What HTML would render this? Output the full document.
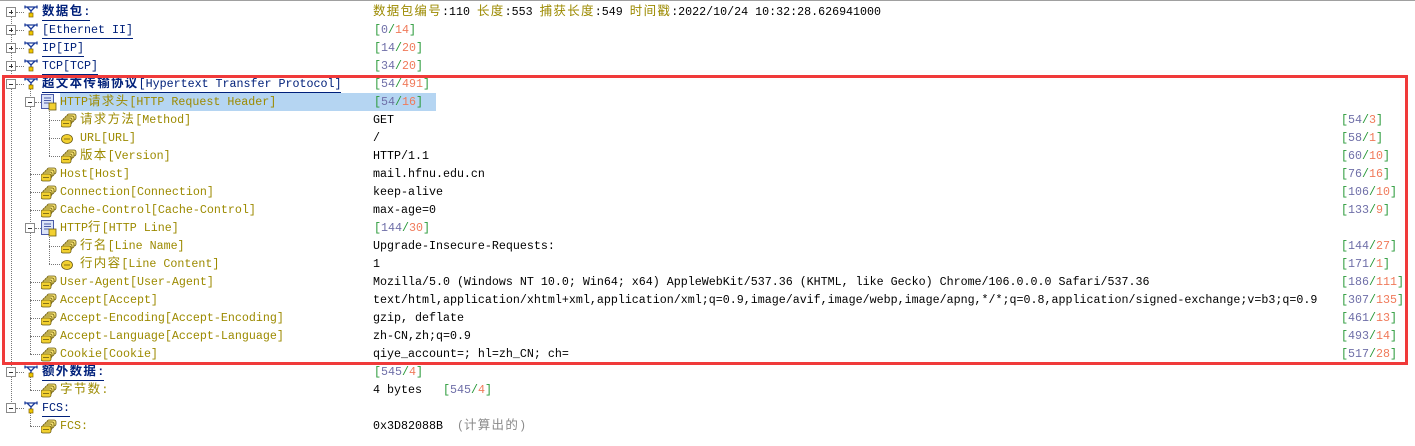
<!DOCTYPE html>
<html><head><meta charset="utf-8"><style>
body{margin:0;width:1415px;height:446px;background:#fff;position:relative;overflow:hidden;font-family:"Liberation Mono","Noto Sans CJK SC",monospace;font-size:11.67px;color:#000}
.top{position:absolute;left:0;top:0;width:1415px;height:1px;background:#a0a0a0}
.r{position:absolute;height:18px;line-height:18px;white-space:nowrap}
.c{font-family:"Noto Sans CJK SC","WenQuanYi Zen Hei",sans-serif;font-size:12.5px;letter-spacing:1.3px;line-height:1}
.l0{color:#00207a;font-weight:bold;border-bottom:1.5px solid #00207a;line-height:15px;display:inline-block}
.lb{color:#9c8a00}
.g{color:#2a9a3a}.p{color:#6f6fa8}.s{color:#f07a5a}.gy{color:#8a8a8a}
.vl{position:absolute;border-left:1px dotted #777;width:0}
.hl{position:absolute;border-top:1px dotted #777;height:0}
.ex{position:absolute;width:8px;height:8px;border:1px solid #8a8a8a;background:#fff}
.ex:before{content:"";position:absolute;left:2px;top:3.5px;width:4px;height:1px;background:#333}
.ex.p2:after{content:"";position:absolute;left:3.5px;top:2px;width:1px;height:4px;background:#333}
svg{position:absolute}
.sel{position:absolute;left:60px;top:93px;width:376px;height:18px;background:#b5d5f2}
.box{position:absolute;left:2px;top:75px;width:1400px;height:284px;border:3px solid #f03a3a}
</style></head><body>
<div class="top"></div>
<div class="sel"></div>
<div class="vl" style="left:11px;top:12px;height:396px"></div>
<div class="vl" style="left:30px;top:84px;height:270px"></div>
<div class="vl" style="left:30px;top:372px;height:18px"></div>
<div class="vl" style="left:30px;top:408px;height:18px"></div>
<div class="vl" style="left:49px;top:102px;height:54px"></div>
<div class="vl" style="left:49px;top:228px;height:36px"></div>
<div class="hl" style="left:16px;top:12px;width:8px"></div>
<div class="hl" style="left:16px;top:30px;width:8px"></div>
<div class="hl" style="left:16px;top:48px;width:8px"></div>
<div class="hl" style="left:16px;top:66px;width:8px"></div>
<div class="hl" style="left:16px;top:84px;width:8px"></div>
<div class="hl" style="left:16px;top:372px;width:8px"></div>
<div class="hl" style="left:16px;top:408px;width:8px"></div>
<div class="hl" style="left:35px;top:102px;width:6px"></div>
<div class="hl" style="left:35px;top:228px;width:6px"></div>
<div class="hl" style="left:30px;top:174px;width:10px"></div>
<div class="hl" style="left:30px;top:192px;width:10px"></div>
<div class="hl" style="left:30px;top:210px;width:10px"></div>
<div class="hl" style="left:30px;top:282px;width:10px"></div>
<div class="hl" style="left:30px;top:300px;width:10px"></div>
<div class="hl" style="left:30px;top:318px;width:10px"></div>
<div class="hl" style="left:30px;top:336px;width:10px"></div>
<div class="hl" style="left:30px;top:354px;width:10px"></div>
<div class="hl" style="left:30px;top:390px;width:10px"></div>
<div class="hl" style="left:30px;top:426px;width:10px"></div>
<div class="hl" style="left:49px;top:120px;width:11px"></div>
<div class="hl" style="left:49px;top:138px;width:11px"></div>
<div class="hl" style="left:49px;top:156px;width:11px"></div>
<div class="hl" style="left:49px;top:246px;width:11px"></div>
<div class="hl" style="left:49px;top:264px;width:11px"></div>
<div class="ex p2" style="left:6px;top:7px"></div>
<div class="ex p2" style="left:6px;top:25px"></div>
<div class="ex p2" style="left:6px;top:43px"></div>
<div class="ex p2" style="left:6px;top:61px"></div>
<div class="ex" style="left:6px;top:79px"></div>
<div class="ex" style="left:6px;top:367px"></div>
<div class="ex" style="left:6px;top:403px"></div>
<div class="ex" style="left:25px;top:97px"></div>
<div class="ex" style="left:25px;top:223px"></div>
<svg width="0" height="0"><defs>
<g id="tr"><path d="M0.5 2 H13.5 M3 2 L7 6 L11 2 M7 6 V9 M1 0.5 V3.5 M13 0.5 V3.5" stroke="#1a3a9a" stroke-width="1.3" fill="none"/><rect x="5" y="8" width="4" height="4" fill="#f0c800" stroke="#806000" stroke-width="0.7"/></g>
<g id="st"><rect x="6" y="1" width="9" height="6" rx="2" fill="#f4e070" stroke="#6a5a10" stroke-width="0.8"/><rect x="4" y="3" width="9" height="6" rx="2" fill="#f4e070" stroke="#6a5a10" stroke-width="0.8"/><rect x="2" y="5" width="9" height="6" rx="2" fill="#f4e070" stroke="#6a5a10" stroke-width="0.8"/><rect x="0" y="7" width="10" height="7" rx="2" fill="#f2d030" stroke="#6a5a10" stroke-width="0.8"/><path d="M2 10.5 H8" stroke="#6a5a10" stroke-width="0.8"/></g>
<g id="ci"><ellipse cx="6" cy="6" rx="5.5" ry="4.5" fill="#f2d030" stroke="#6a5a10" stroke-width="0.8"/><path d="M3 6 H9" stroke="#6a5a10" stroke-width="0.8"/></g>
<g id="dc"><rect x="0.5" y="0.5" width="12" height="14" fill="#dce4f8" stroke="#4a5aa8"/><path d="M3 4 H10 M3 6.5 H10 M3 9 H8" stroke="#4a5aa8"/><rect x="8" y="9" width="7" height="7" fill="#f2d030" stroke="#6a5a10" stroke-width="0.8"/></g>
</defs></svg>
<svg style="left:24px;top:5px" width="14" height="14"><use href="#tr"/></svg>
<svg style="left:24px;top:23px" width="14" height="14"><use href="#tr"/></svg>
<svg style="left:24px;top:41px" width="14" height="14"><use href="#tr"/></svg>
<svg style="left:24px;top:59px" width="14" height="14"><use href="#tr"/></svg>
<svg style="left:24px;top:77px" width="14" height="14"><use href="#tr"/></svg>
<svg style="left:24px;top:365px" width="14" height="14"><use href="#tr"/></svg>
<svg style="left:24px;top:401px" width="14" height="14"><use href="#tr"/></svg>
<svg style="left:41px;top:94px" width="16" height="17"><use href="#dc"/></svg>
<svg style="left:41px;top:220px" width="16" height="17"><use href="#dc"/></svg>
<svg style="left:61px;top:113px" width="16" height="15"><use href="#st"/></svg>
<svg style="left:61px;top:133px" width="12" height="12"><use href="#ci"/></svg>
<svg style="left:61px;top:149px" width="16" height="15"><use href="#st"/></svg>
<svg style="left:61px;top:239px" width="16" height="15"><use href="#st"/></svg>
<svg style="left:61px;top:259px" width="12" height="12"><use href="#ci"/></svg>
<svg style="left:41px;top:167px" width="16" height="15"><use href="#st"/></svg>
<svg style="left:41px;top:185px" width="16" height="15"><use href="#st"/></svg>
<svg style="left:41px;top:203px" width="16" height="15"><use href="#st"/></svg>
<svg style="left:41px;top:275px" width="16" height="15"><use href="#st"/></svg>
<svg style="left:41px;top:293px" width="16" height="15"><use href="#st"/></svg>
<svg style="left:41px;top:311px" width="16" height="15"><use href="#st"/></svg>
<svg style="left:41px;top:329px" width="16" height="15"><use href="#st"/></svg>
<svg style="left:41px;top:347px" width="16" height="15"><use href="#st"/></svg>
<svg style="left:41px;top:383px" width="16" height="15"><use href="#st"/></svg>
<svg style="left:41px;top:419px" width="16" height="15"><use href="#st"/></svg>
<div class="r" style="left:42px;top:3px"><span class="l0"><span class="c">数据包</span>:</span></div>
<div class="r" style="left:42px;top:21px"><span class="l0" style="font-weight:normal">[Ethernet II]</span></div>
<div class="r" style="left:42px;top:39px"><span class="l0" style="font-weight:normal">IP[IP]</span></div>
<div class="r" style="left:42px;top:57px"><span class="l0" style="font-weight:normal">TCP[TCP]</span></div>
<div class="r" style="left:42px;top:75px"><span class="l0"><span class="c">超文本传输协议</span><span style="font-weight:normal">[Hypertext Transfer Protocol]</span></span></div>
<div class="r lb" style="left:60px;top:93px">HTTP<span class="c">请求头</span>[HTTP Request Header]</div>
<div class="r lb" style="left:80px;top:111px"><span class="c">请求方法</span>[Method]</div>
<div class="r lb" style="left:80px;top:129px">URL[URL]</div>
<div class="r lb" style="left:80px;top:147px"><span class="c">版本</span>[Version]</div>
<div class="r lb" style="left:60px;top:165px">Host[Host]</div>
<div class="r lb" style="left:60px;top:183px">Connection[Connection]</div>
<div class="r lb" style="left:60px;top:201px">Cache-Control[Cache-Control]</div>
<div class="r lb" style="left:60px;top:219px">HTTP<span class="c">行</span>[HTTP Line]</div>
<div class="r lb" style="left:80px;top:237px"><span class="c">行名</span>[Line Name]</div>
<div class="r lb" style="left:80px;top:255px"><span class="c">行内容</span>[Line Content]</div>
<div class="r lb" style="left:60px;top:273px">User-Agent[User-Agent]</div>
<div class="r lb" style="left:60px;top:291px">Accept[Accept]</div>
<div class="r lb" style="left:60px;top:309px">Accept-Encoding[Accept-Encoding]</div>
<div class="r lb" style="left:60px;top:327px">Accept-Language[Accept-Language]</div>
<div class="r lb" style="left:60px;top:345px">Cookie[Cookie]</div>
<div class="r" style="left:42px;top:363px"><span class="l0"><span class="c">额外数据</span>:</span></div>
<div class="r lb" style="left:60px;top:381px"><span class="c">字节数</span>:</div>
<div class="r" style="left:42px;top:399px"><span class="l0" style="font-weight:normal">FCS:</span></div>
<div class="r lb" style="left:60px;top:417px">FCS:</div>
<div class="r" style="left:373px;top:3px"><span class="lb c">数据包编号</span>:110 <span class="lb c">长度</span>:553 <span class="lb c">捕获长度</span>:549 <span class="lb c">时间戳</span>:2022/10/24 10:32:28.626941000</div>
<div class="r" style="left:374px;top:21px"><span class="g">[</span><span class="p">0</span><span class="g">/</span><span class="s">14</span><span class="g">]</span></div>
<div class="r" style="left:374px;top:39px"><span class="g">[</span><span class="p">14</span><span class="g">/</span><span class="s">20</span><span class="g">]</span></div>
<div class="r" style="left:374px;top:57px"><span class="g">[</span><span class="p">34</span><span class="g">/</span><span class="s">20</span><span class="g">]</span></div>
<div class="r" style="left:374px;top:75px"><span class="g">[</span><span class="p">54</span><span class="g">/</span><span class="s">491</span><span class="g">]</span></div>
<div class="r" style="left:374px;top:93px"><span class="g">[</span><span class="p">54</span><span class="g">/</span><span class="s">16</span><span class="g">]</span></div>
<div class="r" style="left:373px;top:111px">GET</div>
<div class="r" style="left:373px;top:129px">/</div>
<div class="r" style="left:373px;top:147px">HTTP/1.1</div>
<div class="r" style="left:373px;top:165px">mail.hfnu.edu.cn</div>
<div class="r" style="left:373px;top:183px">keep-alive</div>
<div class="r" style="left:373px;top:201px">max-age=0</div>
<div class="r" style="left:374px;top:219px"><span class="g">[</span><span class="p">144</span><span class="g">/</span><span class="s">30</span><span class="g">]</span></div>
<div class="r" style="left:373px;top:237px">Upgrade-Insecure-Requests:</div>
<div class="r" style="left:373px;top:255px">1</div>
<div class="r" style="left:373px;top:273px">Mozilla/5.0 (Windows NT 10.0; Win64; x64) AppleWebKit/537.36 (KHTML, like Gecko) Chrome/106.0.0.0 Safari/537.36</div>
<div class="r" style="left:373px;top:291px">text/html,application/xhtml+xml,application/xml;q=0.9,image/avif,image/webp,image/apng,*/*;q=0.8,application/signed-exchange;v=b3;q=0.9</div>
<div class="r" style="left:373px;top:309px">gzip, deflate</div>
<div class="r" style="left:373px;top:327px">zh-CN,zh;q=0.9</div>
<div class="r" style="left:373px;top:345px">qiye_account=; hl=zh_CN; ch=</div>
<div class="r" style="left:374px;top:363px"><span class="g">[</span><span class="p">545</span><span class="g">/</span><span class="s">4</span><span class="g">]</span></div>
<div class="r" style="left:373px;top:381px">4 bytes &nbsp; <span class="g">[</span><span class="p">545</span><span class="g">/</span><span class="s">4</span><span class="g">]</span></div>
<div class="r" style="left:373px;top:417px">0x3D82088B &nbsp;<span class="gy">(<span class="c">计算出的</span>)</span></div>
<div class="r" style="left:1341px;top:111px"><span class="g">[</span><span class="p">54</span><span class="g">/</span><span class="s">3</span><span class="g">]</span></div>
<div class="r" style="left:1341px;top:129px"><span class="g">[</span><span class="p">58</span><span class="g">/</span><span class="s">1</span><span class="g">]</span></div>
<div class="r" style="left:1341px;top:147px"><span class="g">[</span><span class="p">60</span><span class="g">/</span><span class="s">10</span><span class="g">]</span></div>
<div class="r" style="left:1341px;top:165px"><span class="g">[</span><span class="p">76</span><span class="g">/</span><span class="s">16</span><span class="g">]</span></div>
<div class="r" style="left:1341px;top:183px"><span class="g">[</span><span class="p">106</span><span class="g">/</span><span class="s">10</span><span class="g">]</span></div>
<div class="r" style="left:1341px;top:201px"><span class="g">[</span><span class="p">133</span><span class="g">/</span><span class="s">9</span><span class="g">]</span></div>
<div class="r" style="left:1341px;top:237px"><span class="g">[</span><span class="p">144</span><span class="g">/</span><span class="s">27</span><span class="g">]</span></div>
<div class="r" style="left:1341px;top:255px"><span class="g">[</span><span class="p">171</span><span class="g">/</span><span class="s">1</span><span class="g">]</span></div>
<div class="r" style="left:1341px;top:273px"><span class="g">[</span><span class="p">186</span><span class="g">/</span><span class="s">111</span><span class="g">]</span></div>
<div class="r" style="left:1341px;top:291px"><span class="g">[</span><span class="p">307</span><span class="g">/</span><span class="s">135</span><span class="g">]</span></div>
<div class="r" style="left:1341px;top:309px"><span class="g">[</span><span class="p">461</span><span class="g">/</span><span class="s">13</span><span class="g">]</span></div>
<div class="r" style="left:1341px;top:327px"><span class="g">[</span><span class="p">493</span><span class="g">/</span><span class="s">14</span><span class="g">]</span></div>
<div class="r" style="left:1341px;top:345px"><span class="g">[</span><span class="p">517</span><span class="g">/</span><span class="s">28</span><span class="g">]</span></div>
<div class="box"></div>
</body></html>
